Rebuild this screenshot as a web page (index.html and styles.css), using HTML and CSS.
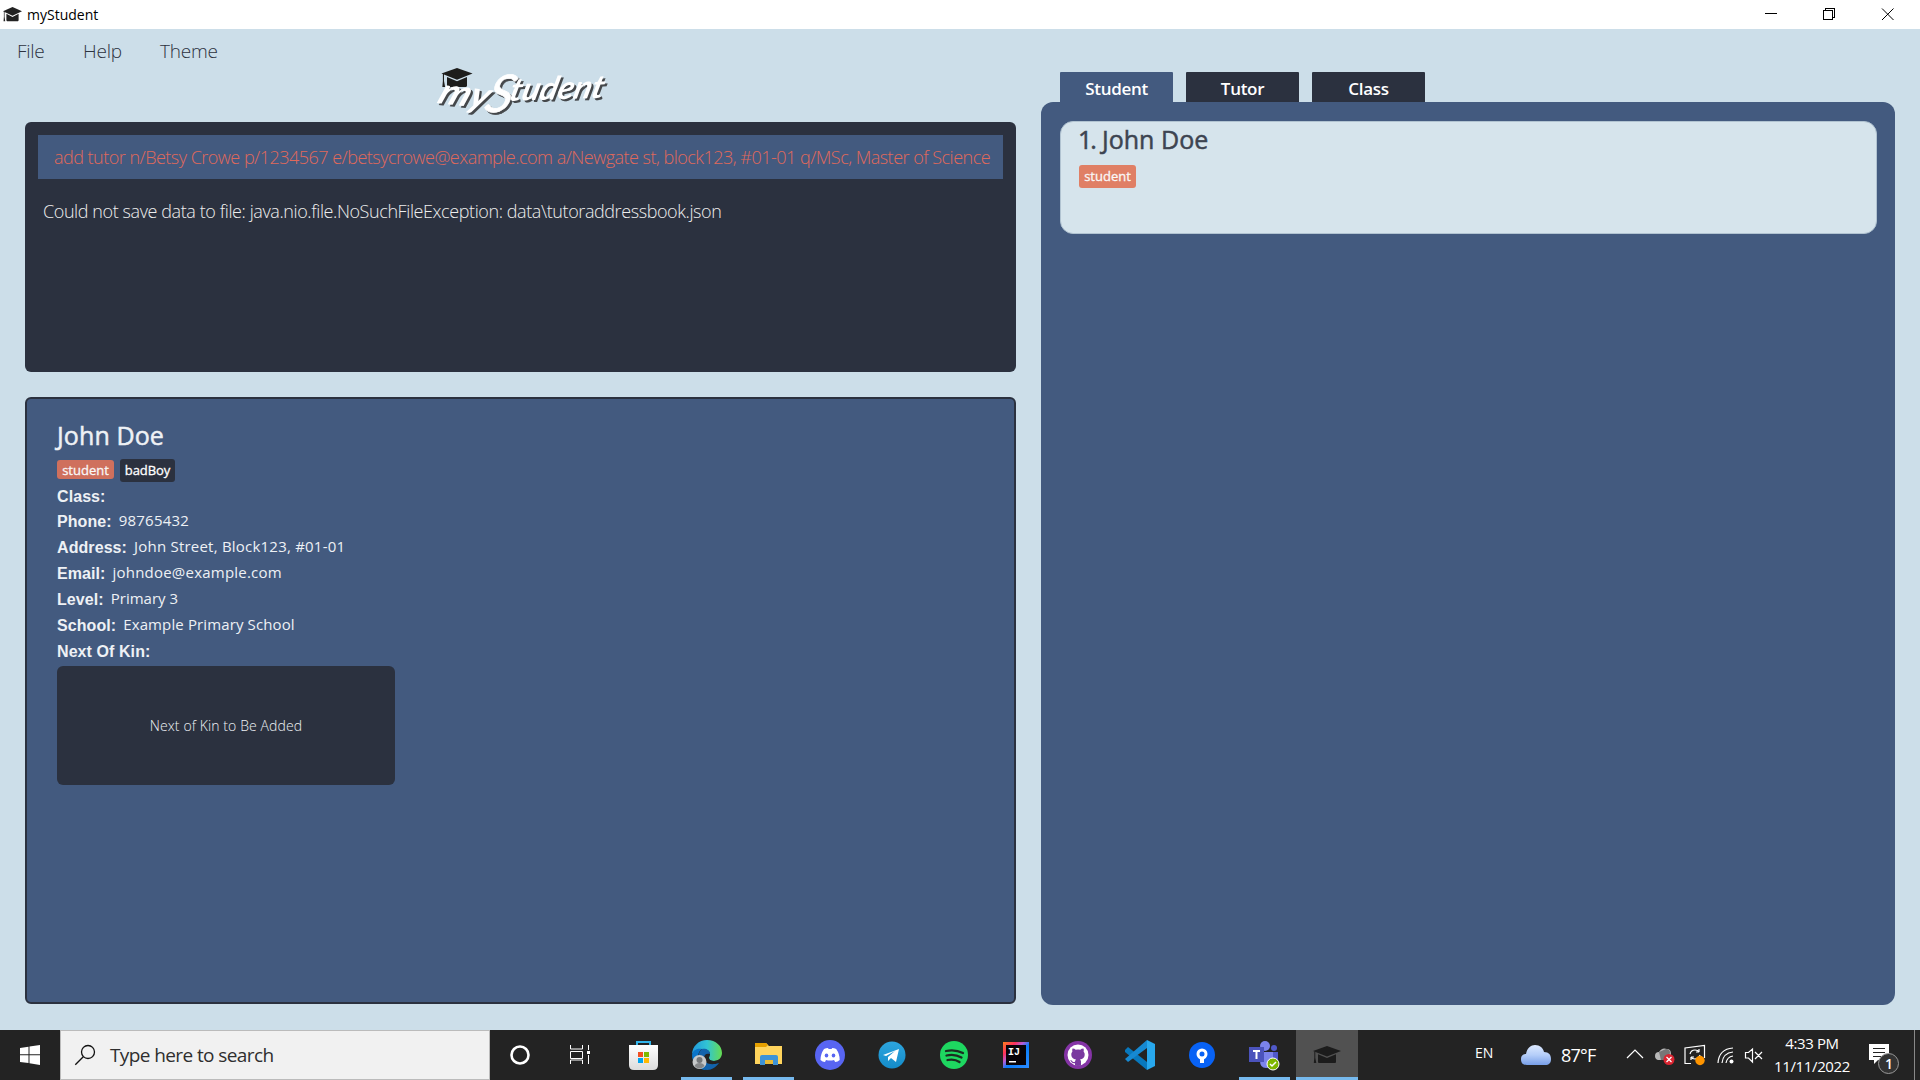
FILE: index.html
```html
<!DOCTYPE html>
<html lang="en">
<head>
<meta charset="utf-8">
<title>myStudent</title>
<link rel="stylesheet" href="styles.css">
</head>
<body>
<svg width="0" height="0" class="defs">
  <symbol id="cap" viewBox="0 0 28 18">
    <path d="M14 0 28 5 14 10.500 0 5Z"/><path d="M5 8.200 14 12l9-3.800V16q0 1-1 1H6q-1 0-1-1Z"/><path d="M1.300 5.500h1v6.200l1 5.300H.8l.5-5.300Z"/>
  </symbol>
</svg>
<header class="titlebar">
  <svg class="app-icon" width="19" height="15" viewBox="0 0 28 18" preserveAspectRatio="none"><use href="#cap"/></svg>
  <span class="app-name">myStudent</span>
  <svg class="win-buttons" width="140" height="29" fill="none" stroke="#000" shape-rendering="crispEdges">
    <path d="M5 13.500h12M63.500 10.500h9v9h-9zM65.500 10v-1.500h9v9H73"/><path d="m122 8.500 11.500 11.500M133.500 8.500 122 20" shape-rendering="auto"/>
  </svg>
</header>
<main class="window">
  <section class="left">
    <nav class="menu"><span class="m-file">File</span><span class="m-help">Help</span><span class="m-theme">Theme</span></nav>
    <svg class="logo" width="190" height="60">
      <use href="#cap" x="11" y="1" width="32" height="20" fill="#1d1d1b"/>
      <g class="logo-text">
        <text class="logo-my" x="0" y="0" textLength="50" lengthAdjust="spacingAndGlyphs" transform="translate(6 36) rotate(6) skewX(-16)">my</text>
        <text class="logo-s" x="0" y="0" transform="translate(53 45) skewX(-16)">S</text>
        <text x="0" y="0" textLength="94" lengthAdjust="spacingAndGlyphs" transform="translate(78 34) rotate(-2) skewX(-16)">tudent</text>
      </g>
    </svg>
    <div class="console">
      <div class="command"><span>add tutor n/Betsy Crowe p/1234567 e/betsycrowe@example.com a/Newgate st, block123, #01-01 q/MSc, Master of Science</span></div>
      <p class="result">Could not save data to file: java.nio.file.NoSuchFileException: data\tutoraddressbook.json</p>
    </div>
    <article class="details">
      <h1>John Doe</h1>
      <div class="tags"><span class="tag role">student</span><span class="tag dark">badBoy</span></div>
      <dl>
        <div class="class-row"><dt>Class:</dt></div>
        <div><dt>Phone:</dt><dd>98765432</dd></div>
        <div><dt>Address:</dt><dd>John Street, Block123, #01-01</dd></div>
        <div><dt>Email:</dt><dd>johndoe@example.com</dd></div>
        <div><dt>Level:</dt><dd class="level">Primary 3</dd></div>
        <div><dt>School:</dt><dd class="school">Example Primary School</dd></div>
        <div><dt>Next Of Kin:</dt></div>
      </dl>
      <div class="kin">Next of Kin to Be Added</div>
    </article>
  </section>
  <section class="right">
    <div class="tabs"><span class="tab active">Student</span><span class="tab">Tutor</span><span class="tab">Class</span></div>
    <div class="list">
      <div class="card"><h2><span>1.</span><span>John Doe</span></h2><span class="tag card-tag">student</span></div>
    </div>
  </section>
</main>
<footer class="taskbar">
  <div class="start"><svg width="20" height="20" fill="#fff"><path d="M0 3 8.500 1.800V9.300H0zM9.500 1.600 20 0v9.300H9.500zM0 10.300h8.500v7.800L0 17zM9.500 10.300H20V20L9.500 18.300z"/></svg></div>
  <div class="search"><svg width="22" height="22" fill="none" stroke="#111" stroke-width="1.300"><circle cx="14" cy="8" r="6.500"/><path d="m9.300 12.700-8 8"/></svg><span>Type here to search</span></div>
  <div class="apps">
    <div><svg width="30" height="30"><circle cx="15" cy="15" r="8.500" fill="none" stroke="#fff" stroke-width="2.600"/></svg></div>
    <div><svg width="30" height="30" fill="none" stroke="#fff"><path d="M3.500 5v4h12V5M3.500 24v-4h12v4M3.500 11.500h12v7h-12zM21.500 5v5M21.500 15v9"/><path fill="#fff" stroke="none" d="M20 11h3v3h-3z"/></svg></div>
    <div><svg width="30" height="30"><defs><linearGradient id="store" x2="0" y2="1"><stop stop-color="#fff"/><stop offset="1" stop-color="#dcdcdc"/></linearGradient></defs><path d="M8 6V2h13v4" fill="none" stroke="#32b5ec" stroke-width="2"/><path d="M0 5h29v20q0 5-5 5H5q-5 0-5-5z" fill="url(#store)"/><path fill="#f25022" d="M9 12h5v5H9z"/><path fill="#7fba00" d="M15 12h5v5h-5z"/><path fill="#00a4ef" d="M9 18h5v5H9z"/><path fill="#ffb900" d="M15 18h5v5h-5z"/></svg></div>
    <div class="open"><svg width="30" height="30"><defs><linearGradient id="edge" x1="0" x2="1"><stop stop-color="#2199dc"/><stop offset=".5" stop-color="#31c4d4"/><stop offset="1" stop-color="#66dc51"/></linearGradient></defs><path d="M0 15C0 6 7 0 15 0c9 0 15 6 15 13 0 5-4 8-8 8-3 0-5-1-5-3 0-1 1-2 1-4 0-3-3-5-8-5-5 0-9 2-10 6Z" fill="url(#edge)"/><path d="M0 15c1-5 5-7 10-6-4 3-5 8-3 13 2 5 5 7 8 8C6 30 0 23 0 15Z" fill="#0b75c9"/><path d="M10 9c5-1 8 2 8 5-3-1-6 0-6 4 0 5 6 8 15 5-3 4-7 7-12 7C6 28 3 15 10 9Z" fill="#1263ac"/><path d="M18 14c-1 1-1 3-1 4 0 2 2 3 5 3 2 0 4-1 5.500-1.200 1 .5.8 1.500-.5 2-7 2-12 1-13.500-3-.5-2.500 1-4.800 4.500-4.800Z" fill="#232323"/><circle cx="7.500" cy="22" r="7" fill="#c7c9ca"/><circle cx="7.500" cy="20" r="3" fill="#737679"/><path d="M2.500 26c1-4 9-4 10 0q-5 5-10 0" fill="#858789"/></svg></div>
    <div class="open"><svg width="30" height="30"><path d="M1 3h11l3 3h13v18H1z" fill="#ffd45d"/><path d="M1 3h11l2 2-2 2H1z" fill="#e6a000"/><path d="M6 25V17q0-2 2-2h14q2 0 2 2v8h-5v-5h-8v5z" fill="#3d93d7"/><path d="M11 20h8v4h-8z" fill="#e9bb37"/></svg></div>
    <div><svg width="30" height="30"><circle cx="15" cy="15" r="15" fill="#5865f2"/><path d="M9 9q2-1 4-1l.6 1h3l.6-1q2 0 4 1 3.500 5 3.500 11-2 2-4.500 2L19 20q-4 1-8 0l-1 2q-2.500 0-4.500-2Q5.500 14 9 9Z" fill="#fff"/><ellipse cx="11.500" cy="15.500" rx="1.800" ry="2" fill="#5865f2"/><ellipse cx="18.500" cy="15.500" rx="1.800" ry="2" fill="#5865f2"/></svg></div>
    <div><svg width="30" height="30"><defs><linearGradient id="tg" x2="0" y2="1"><stop stop-color="#2da5de"/><stop offset="1" stop-color="#148cca"/></linearGradient></defs><circle cx="15" cy="15" r="13.500" fill="url(#tg)"/><path d="m6 15 16-6-3 13-5-4-3 3v-4l7-6-9 5z" fill="#fff"/></svg></div>
    <div><svg width="30" height="30"><circle cx="15" cy="15" r="14" fill="#1ed760"/><path d="M7 11q9-2 17 2M7.500 15.500q8-2 15 2M8.500 20q7-1.500 12 2" fill="none" stroke="#1c2c21" stroke-width="2.300" stroke-linecap="round"/></svg></div>
    <div><svg width="30" height="30"><defs><linearGradient id="ij" x2="1" y2="1"><stop stop-color="#fc801d"/><stop offset=".25" stop-color="#fe315d"/><stop offset=".4" stop-color="#b35ed8"/><stop offset=".55" stop-color="#087cfa"/><stop offset="1" stop-color="#2d8aff"/></linearGradient></defs><path d="M2 2h26v26H2z" fill="url(#ij)"/><path d="M5 5h20v20H5z" fill="#080308"/><text x="7" y="15" class="ij">IJ</text><path d="M8 21h7v1.500H8z" fill="#fff"/></svg></div>
    <div><svg width="30" height="30"><circle cx="15" cy="15" r="14" fill="#8534a6"/><circle cx="15" cy="15" r="10.500" fill="#fff"/><path d="M9.500 8.500q2 0 3.200 1.300 2.300-.4 4.600 0Q18.500 8.500 20.500 8.500q.6 1.500.1 3 1.400 1.500 1.100 3.500-.3 3.800-4.700 4.400 1 1 1 2.200v4q-3 .6-6 0v-2.400q-3 .6-3.900-1.700l-1-1.200q1.700-.3 2.400 1.200 1 1 2.500.3.100-1.500 1-2.400-4.400-.6-4.700-4.400-.3-2 1.100-3.500-.5-1.500.1-3Z" fill="#7a3aa0"/></svg></div>
    <div><svg width="30" height="30"><path d="m0 10 3-3 19 15v8L0 12z" fill="#0878bd"/><path d="m0 19 3 3L22 8V0z" fill="#1689d2"/><path d="m22 0 8 4v22l-8 4z" fill="#28a8ed"/></svg></div>
    <div><svg width="30" height="30"><circle cx="15" cy="15" r="13" fill="#0862f5"/><circle cx="15" cy="14" r="4" fill="none" stroke="#fff" stroke-width="3"/><path d="M13 18h4v5h-4z" fill="#fff"/></svg></div>
    <div class="open"><svg width="31" height="31"><circle cx="16" cy="6" r="5" fill="#7b83eb"/><circle cx="25" cy="8" r="3" fill="#5059c9"/><path d="M20 12h9v9q-2 5-9 4z" fill="#5059c9"/><path d="M11 12h13v9q0 7-7 7-6 0-6-7z" fill="#7b83eb"/><path d="M0 7h15v15H0z" fill="#4b53bc"/><path d="M4 10h7v2H8.500v7h-2v-7H4z" fill="#fff"/><circle cx="24" cy="24" r="6" fill="#7eb500" stroke="#fff"/><path d="m21 24 2 2 4-4" fill="none" stroke="#fff" stroke-width="1.500"/></svg></div>
    <div class="open current"><svg width="28" height="18" fill="#1c1c1c"><use href="#cap"/></svg></div>
  </div>
  <div class="tray">
    <span class="lang">EN</span>
    <svg class="cloud" width="31" height="21"><defs><linearGradient id="cl" x2="0" y2="1"><stop stop-color="#dce9ff"/><stop offset=".5" stop-color="#b5cef9"/><stop offset="1" stop-color="#789fe8"/></linearGradient></defs><path d="M6 20C1 20 0 17 0 14c0-4 3-5 5-5C6 3 10 0 14 0c5 0 8 3 9 7 5 0 7 3 7 7s-2 6-6 6z" fill="url(#cl)"/></svg>
    <span class="temp">87°F</span>
    <svg class="tray-icons" width="140" height="30" fill="none" stroke="#fff" stroke-width="1.200">
      <path d="m0 18 8-8 8 8"/>
      <path d="M31 20q-3-1-3-4 0-4 4-4 3-5 8-3 4 0 4 5v6z" fill="#b7b7b7" stroke="none"/><path d="m32 12 7-3q4 0 4 4l-4 7h-5z" fill="#777" stroke="none"/><circle cx="42" cy="19.500" r="5.500" fill="#d92430" stroke="none"/><path d="m39.500 17 5 5m0-5-5 5"/>
      <path d="M64 23.500H58V8l19.500-2.500V18"/><path d="M63 14q1-4 5-4 3 0 4 2V9m0 3h-3M73 15q-1 4-5 4-3 0-4-2v3m0-3h3"/><circle cx="73" cy="20.500" r="4.700" fill="#ff9500" stroke="none"/>
      <path d="M91 23Q92 9 106 8M95 23q1-10 11-11M99 23q1-6 7-7"/><circle cx="104.500" cy="21.500" r="2" fill="#fff" stroke="none"/>
      <path d="M118.500 12.500h3l4-3.500v13l-4-4h-3zM128 12l7 7m0-7-7 7"/>
    </svg>
    <div class="clock"><span class="time">4:33 PM</span><span class="date">11/11/2022</span></div>
    <svg class="notice" width="31" height="32"><path d="M0 1h20v16H9l-4 4v-4H0z" fill="#fff"/><path d="M4 5.500h12M4 9.500h12M4 13.500h8" stroke="#222"/><circle cx="19.500" cy="20.500" r="10" fill="#333" stroke="#999"/><text x="16" y="26">1</text></svg>
    <i class="edge-line"></i>
  </div>
</footer>
</body>
</html>
```

FILE: styles.css
```css
* { box-sizing: border-box; }
body { margin: 0; width: 1920px; height: 1080px; overflow: hidden; display: flex; flex-direction: column; background: #ccdee9; font-family: "Open Sans", "Noto Sans", sans-serif; white-space: nowrap; }
svg { display: block; flex: none; overflow: visible; }
.defs { position: absolute; }
h1, h2, p, dl, dt, dd { margin: 0; font-weight: 400; }

.titlebar { height: 29px; flex: none; display: flex; align-items: center; background: #fff; padding-left: 3px; }
.app-icon { fill: #222; }
.app-name { margin-left: 5px; font-size: 14px; letter-spacing: 0; color: #000; }
.win-buttons { margin-left: auto; margin-right: 20px; }

.window { height: 1001px; flex: none; display: flex; gap: 25px; padding: 0 25px; }
.left { width: 991px; display: flex; flex-direction: column; }
.menu { height: 38px; margin-left: -8px; display: flex; padding-top: 9px; gap: 38px; font-size: 19px; line-height: 27px; font-weight: 300; color: #2c323f; }
.m-file { width: 28px; letter-spacing: -.3px; }
.m-help { width: 39px; letter-spacing: -.2px; }
.m-theme { letter-spacing: -.2px; }
.logo { width: 190px; height: 55px; margin-left: 405px; }
.logo-text { font: italic 700 32px Lato, sans-serif; fill: #fff; filter: drop-shadow(2px 2px 0 #45484b); }
.logo-my { font-size: 36px; }
.logo-s { font-size: 52px; font-weight: 400; stroke: #fff; stroke-width: .6px; }
.console { height: 250px; background: #2b313f; border-radius: 6px; padding: 13px; }
.command { height: 44px; background: #435a7f; padding: 0 12px 0 16px; font-size: 18px; font-weight: 300; line-height: 45px; color: #e0695b; }
.command span { display: block; letter-spacing: -.51px; }
.result { margin: 18px 0 0 5px; font-size: 18px; font-weight: 300; line-height: 28px; letter-spacing: -.41px; color: #eee; }
.details { margin-top: 25px; height: 607px; border: 2px solid #2b313f; border-radius: 6px; background: #435a7f; padding: 19px 30px; color: #eef1f5; }
h1 { font-size: 25px; line-height: 34px; letter-spacing: .1px; -webkit-text-stroke: .5px; }
.tags { display: flex; gap: 6px; align-items: center; height: 23px; margin-top: 7px; }
.tag { border-radius: 3px; color: #f9f7f7; font-size: 13px; text-align: center; -webkit-text-stroke: .3px; }
.role { width: 57px; height: 19px; margin-top: -2px; line-height: 21px; background: #cf705d; }
.dark { width: 55px; height: 23px; line-height: 22px; letter-spacing: -.1px; background: #2b313f; color: #fff; }
dl { padding-top: 2px; }
dl div { height: 26px; display: flex; gap: 7px; align-items: center; }
dl .class-row { height: 24px; }
dt { font: 700 16px/26px "Liberation Sans", Arial, sans-serif; letter-spacing: .08px; padding-top: 1px; }
dd { font-size: 15px; line-height: 24px; letter-spacing: .22px; padding-bottom: 2px; }
.level { letter-spacing: 0; }
.school { letter-spacing: .12px; }
.kin { width: 338px; height: 119px; margin-top: 2px; border-radius: 6px; background: #2b313f; text-align: center; line-height: 119px; font-size: 14px; font-weight: 300; letter-spacing: .1px; }

.right { width: 854px; padding-top: 43px; }
.tabs { display: flex; gap: 13px; padding-left: 19px; }
.tab { width: 113px; height: 30px; background: #2b313f; border-radius: 1px 1px 0 0; color: #fff; text-align: center; font-size: 17px; font-weight: 600; line-height: 33px; letter-spacing: -.3px; }
.tab.active { background: #435a7f; }
.list { height: 903px; padding: 19px 18px 19px 19px; background: #435a7f; border-radius: 12px; }
.card { height: 113px; border: 1px solid #b1c3d1; border-radius: 13px; background: #d6e4ec; padding: 0 18px; color: #3d4451; }
h2 { display: flex; gap: 7px; font-size: 25px; line-height: 35px; letter-spacing: .05px; -webkit-text-stroke: .5px; }
h2 span:first-child { letter-spacing: -2px; margin-left: -1px; }
.card-tag { display: block; width: 57px; height: 23px; margin-top: 8px; line-height: 22px; background: #e07f65; }

.taskbar { height: 50px; flex: none; display: flex; background: #232323; color: #fff; }
.start { width: 60px; display: flex; align-items: center; justify-content: center; }
.search { width: 430px; margin-right: -1px; background: #f1f1f1; border: 1px solid #bbb; display: flex; align-items: center; color: #2e2e2e; font-size: 19px; padding-left: 13px; }
.search span { margin-left: 14px; letter-spacing: -.6px; }
.apps { display: grid; grid-template-columns: repeat(13, 62px) 63px; }
.apps div { display: flex; align-items: center; justify-content: center; }
.apps .open { box-shadow: inset 0 -3px #76b9ed; margin: 0 5px 0 6px; }
.apps .open.current { margin: 0 0 0 1px; background: #515151; }
.ij { font: 700 10px "Liberation Mono", monospace; fill: #fff; }
.tray { flex: 1; display: flex; align-items: center; }
.lang { margin-left: 117px; width: 46px; font-size: 14px; margin-top: -5px; }
.temp { margin-left: 9px; width: 66px; font-size: 18px; letter-spacing: -.8px; }
.clock { width: 90px; display: flex; flex-direction: column; align-items: center; font-size: 15px; line-height: 23px; }
.time { letter-spacing: -.4px; }
.date { letter-spacing: -.35px; }
.notice { margin: 8px 0 0 12px; }
.notice text { font-size: 14px; font-weight: 600; fill: #fff; }
.edge-line { width: 1px; height: 50px; margin-left: 14px; background: #888; }
```
